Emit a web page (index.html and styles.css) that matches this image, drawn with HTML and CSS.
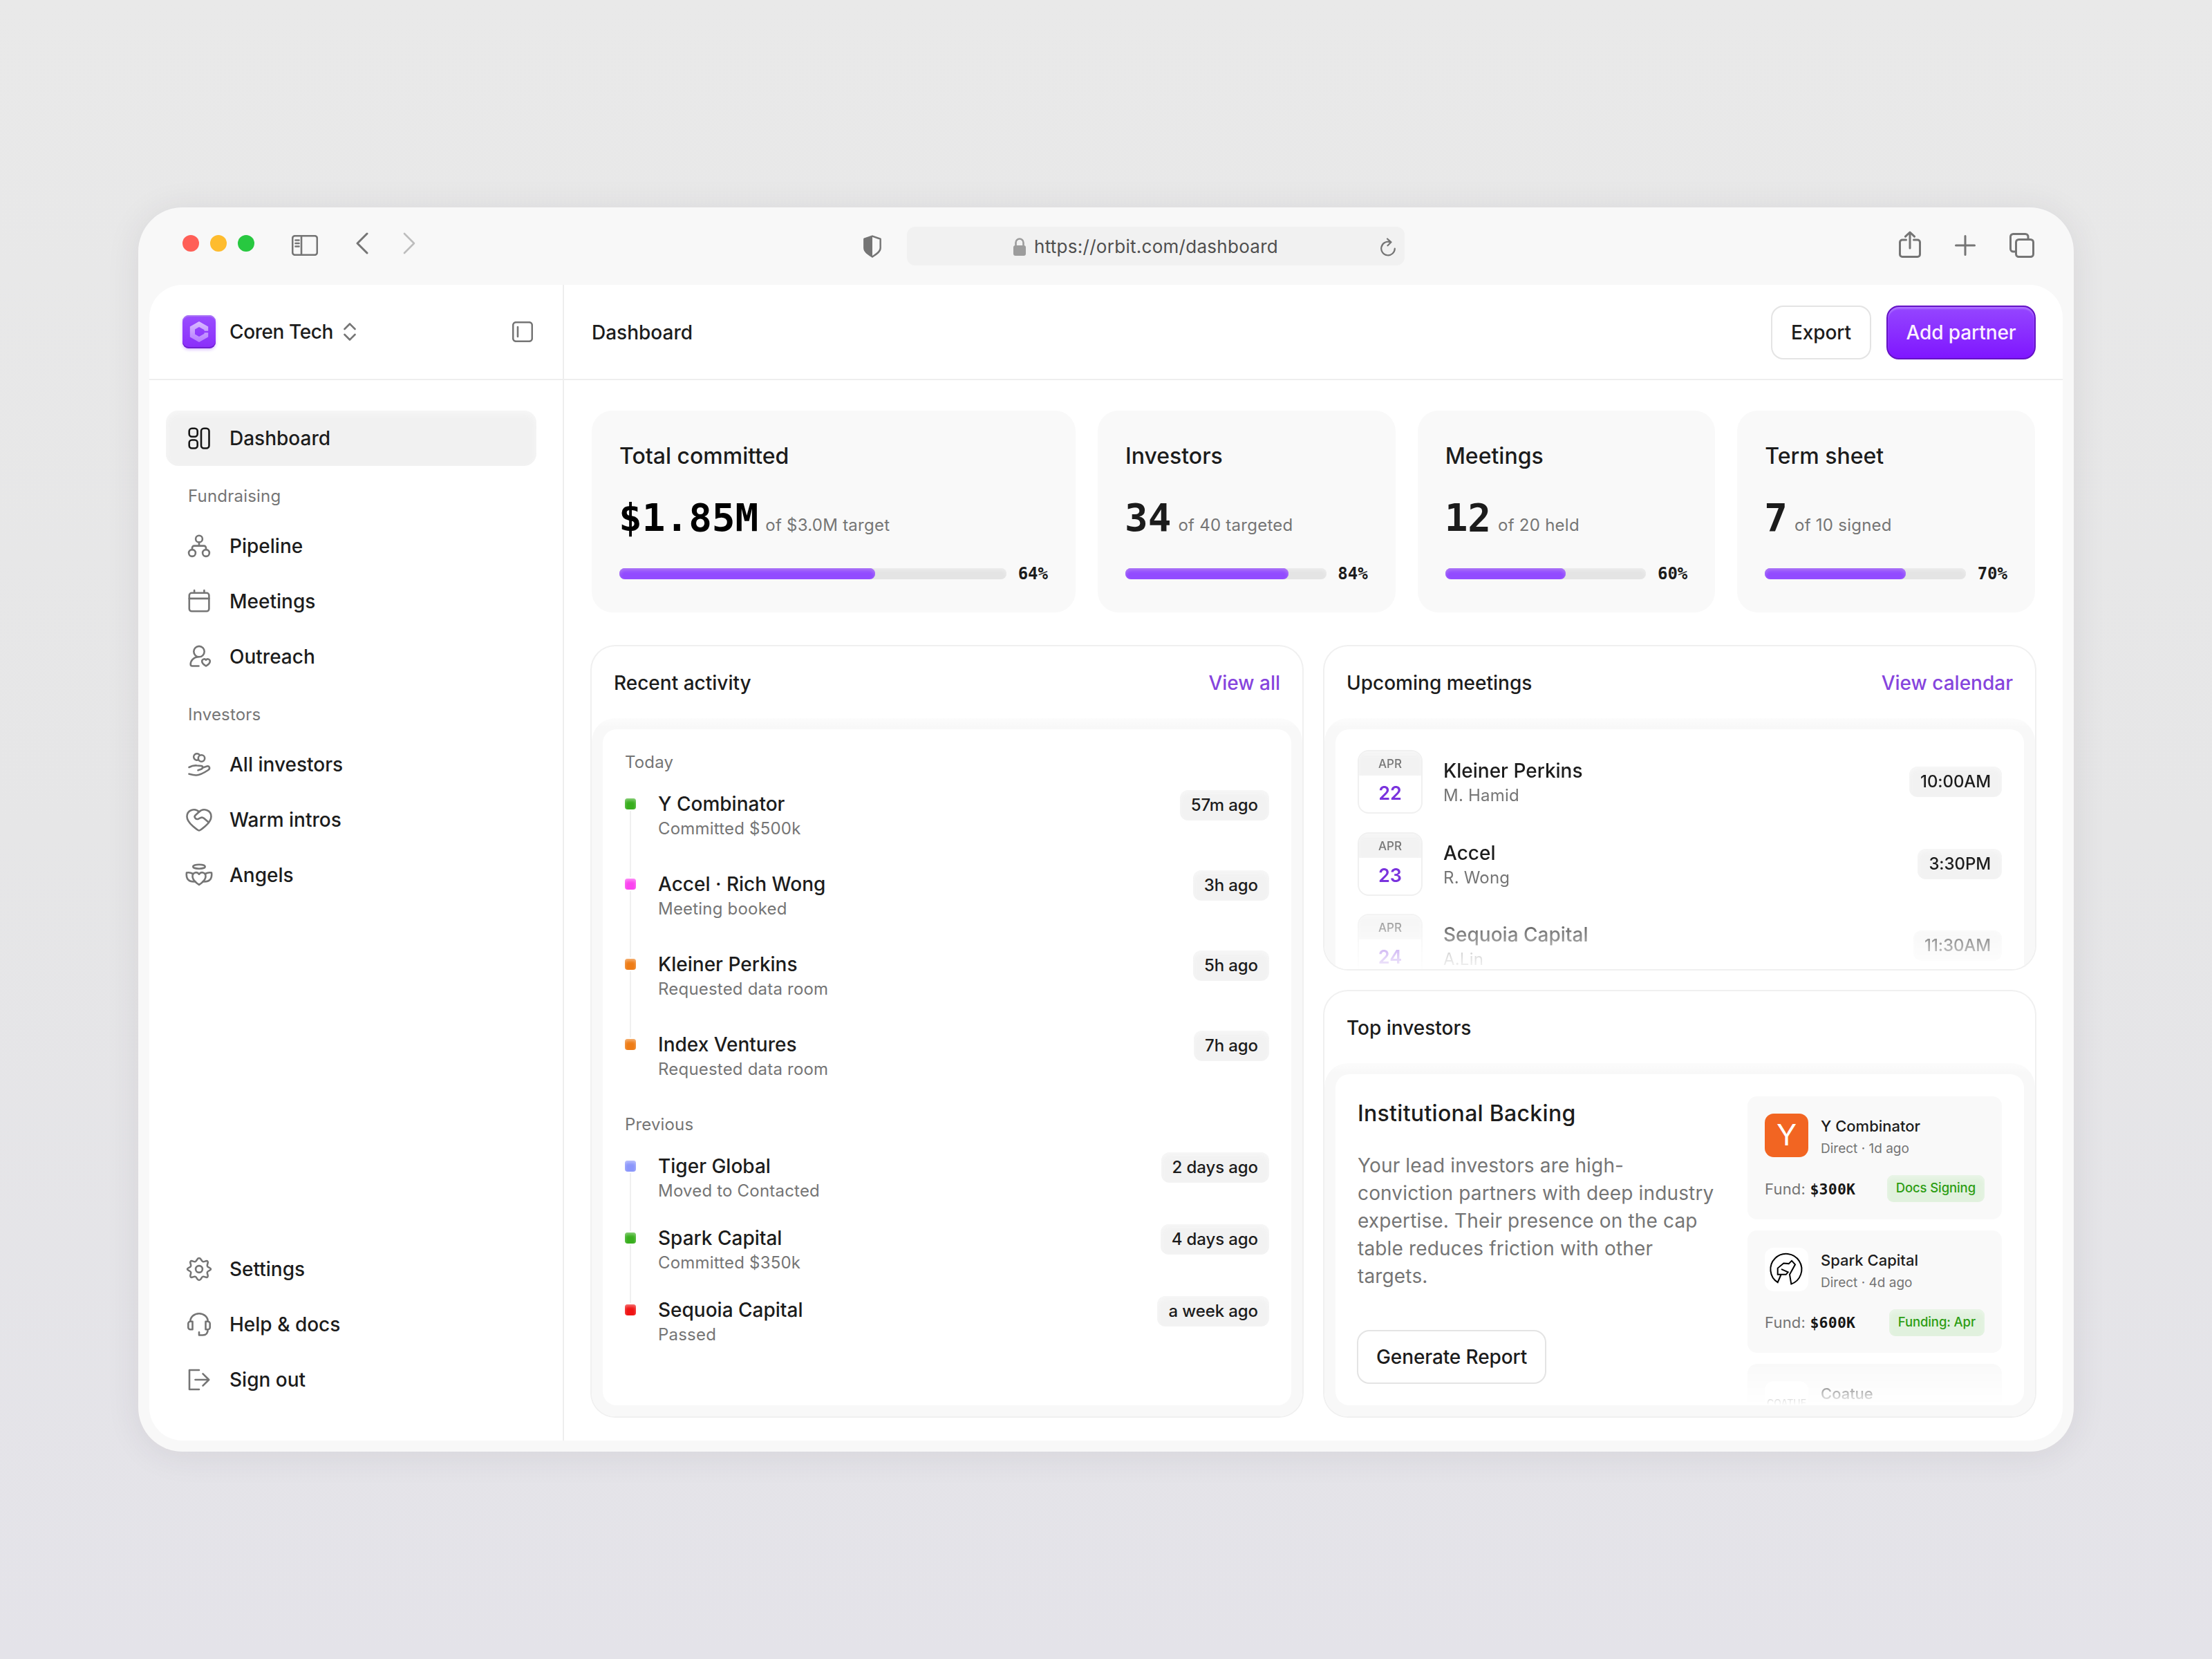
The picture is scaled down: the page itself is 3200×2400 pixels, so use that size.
FILE: index.html
```html
<!DOCTYPE html>
<html lang="en">
<head>
  <meta charset="UTF-8">
  <meta name="viewport" content="width=device-width, initial-scale=1.0">
  <title>Orbit - Dashboard</title>
  <link rel="stylesheet" href="styles.css">
</head>
<body>
  <div class="browser">
    <!-- Browser toolbar -->
    <div class="toolbar">
      <div class="toolbar-left">
        <div class="lights"><i class="red"></i><i class="yellow"></i><i class="green"></i></div>
        <svg class="tb-sidebar" width="38" height="30" viewBox="0 0 38 30"><rect x="1.2" y="1.2" width="35.6" height="27.6" rx="3.5"/><path d="M14 1v28M5.5 7.5h5M5.5 12h5M5.5 16.5h5"/></svg>
        <svg class="tb-back" width="18" height="32" viewBox="0 0 18 32"><path d="M16 2L2 16l14 14"/></svg>
        <svg class="tb-forward" width="18" height="32" viewBox="0 0 18 32"><path d="M2 2l14 14L2 30"/></svg>
      </div>
      <div class="toolbar-center">
        <svg class="tb-shield" width="28" height="34" viewBox="0 0 30 36"><path d="M15 2.500L27.500 7v14c0 6-7 10-12.500 13.500C9.500 31 2.500 27 2.500 21V7z"/><path class="solid" d="M15 2L2 7v14c0 6 7 10 13 14z"/></svg>
        <div class="url-bar">
          <svg class="tb-lock" width="20" height="26" viewBox="0 0 20 26"><rect class="solid" x="1" y="11" width="18" height="15" rx="3"/><path d="M4.500 12V7a5.500 5.500 0 0 1 11 0v5"/></svg>
          <span>https://orbit.com/dashboard</span>
          <svg class="tb-reload" width="24" height="28" viewBox="0 0 24 28"><path d="M15 6.200A9.800 9.800 0 1 0 21.800 15.500M11 1.500l5.500 4.800-5 5"/></svg>
        </div>
      </div>
      <div class="toolbar-right">
        <svg width="32" height="40" viewBox="0 0 32 40"><path d="M10.500 13H5a3.500 3.500 0 0 0-3.500 3.500V34A3.500 3.500 0 0 0 5 37.500h22a3.500 3.500 0 0 0 3.500-3.500V16.500A3.500 3.500 0 0 0 27 13h-5.500M16 25V2M9.500 8.200L16 2l6.500 6.200"/></svg>
        <svg width="30" height="30" viewBox="0 0 30 30"><path d="M15 1.500v27M1.500 15h27"/></svg>
        <svg width="36" height="36" viewBox="0 0 36 36"><path d="M9 27H5.500A4 4 0 0 1 1.500 23V5.500a4 4 0 0 1 4-4H23a4 4 0 0 1 4 4V9"/><rect x="9.500" y="9.500" width="25" height="25" rx="4"/></svg>
      </div>
    </div>

    <div class="app">
      <!-- Sidebar -->
      <aside class="sidebar">
        <div class="workspace">
          <svg class="logo" width="48" height="48" viewBox="0 0 48 48">
            <defs>
              <linearGradient id="logoC" x1="0" y1="0" x2="0" y2="1"><stop offset="0" stop-color="#d9bcff"/><stop offset="1" stop-color="#b67cff"/></linearGradient>
            </defs>
            <path fill="url(#logoC)" d="M24 9l13.200 7.500v6.300H31.500v-1.500L24 17l-6 3.500v7L24 31l7.500-4.300v-1.500h5.700v6.300L24 39l-13.200-7.500v-15z"/>
          </svg>
          <span class="workspace-name">Coren Tech</span>
          <svg class="updown" width="18" height="26" viewBox="0 0 18 26"><path d="M1.500 9L9 1.500 16.500 9M1.500 17L9 24.500l7.500-7.500"/></svg>
          <svg class="collapse" width="30" height="30" viewBox="0 0 30 30"><rect x="1.200" y="1.200" width="27.600" height="27.600" rx="4.500"/><path d="M8 8v14"/></svg>
        </div>
        <nav class="nav">
          <a class="nav-item active"><svg viewBox="0 0 44 44"><rect x="7.700" y="7.700" width="12" height="12" rx="4"/><rect x="7.700" y="24.500" width="12" height="12" rx="4"/><rect x="25" y="7.700" width="11.500" height="28.800" rx="4"/></svg>Dashboard</a>
          <h4>Fundraising</h4>
          <a class="nav-item"><svg viewBox="0 0 44 44"><circle cx="22" cy="11.700" r="4.900"/><circle cx="12" cy="32" r="4.900"/><circle cx="32" cy="32" r="4.900"/><path d="M22 16.600v5M12 27v-2.400a3 3 0 0 1 3-3h14a3 3 0 0 1 3 3V27"/></svg>Pipeline</a>
          <a class="nav-item"><svg viewBox="0 0 44 44"><rect x="7.800" y="9.800" width="28.600" height="26.500" rx="3.500"/><path d="M7.800 17.900h28.600M15.100 9.800V6M29.400 9.800V6"/></svg>Meetings</a>
          <a class="nav-item"><svg viewBox="0 0 44 44"><circle cx="22" cy="14.600" r="7.700"/><path d="M20.500 22.300C14 23 9.700 27.500 9.700 33q0 2.500 2.500 2.500h9.300"/><path d="M32 35.500c-3-1.800-5.800-3.800-5.800-6.700a3.200 3.200 0 0 1 5.800-2 3.200 3.200 0 0 1 5.800 2c0 2.900-2.800 4.900-5.800 6.700z"/></svg>Outreach</a>
          <h4>Investors</h4>
          <a class="nav-item"><svg viewBox="0 0 44 44"><circle cx="25.500" cy="13" r="4.700"/><path d="M21 15.200a4.700 4.700 0 1 1 1.300-7.500M7.500 26c4-2.200 8-3 11.500-2.500l6 .5c3 .3 3 3.600 0 4.700l-4.500 1.600M26.800 26.800l6.700-2.200c3.600-1 5 3.200 1.700 5.400-6 4-12 7.500-17.500 7.500-3.700 0-6.500-.8-10.200-1.800"/></svg>All investors</a>
          <a class="nav-item"><svg viewBox="0 0 44 44"><path d="M22 37.500c-1 0-17.500-10.500-17.500-20C4.500 7.500 16 4.500 22 10.500c6-6 17.500-3 17.500 7 0 9.500-16.500 20-17.500 20z"/><path d="M22 10.500l-5.500 5c-2.600 2.600 1 6.500 4.500 5.200l3-1.600c2-1 3.500-.6 5 .7l7 6"/></svg>Warm intros</a>
          <a class="nav-item"><svg viewBox="0 0 44 44"><ellipse cx="22" cy="9.700" rx="8.700" ry="3"/><path d="M22 36c-5-3.300-9.500-7.400-9.500-12.300 0-5.600 6.500-7.500 9.500-3 3-4.500 9.500-2.600 9.500 3C31.500 28.600 27 32.700 22 36z"/><path d="M13 20c-3-1.700-6-2.200-9-1.500-1.300 9 3 13.800 12.500 12.800M31 20c3-1.700 6-2.200 9-1.500 1.300 9-3 13.800-12.500 12.800"/></svg>Angels</a>
          <div class="nav-bottom">
            <a class="nav-item"><svg viewBox="0 0 44 44"><circle cx="22" cy="22" r="4.900"/><path d="M22 6c3.200 0 2.900 4.200 5.400 5.100 2.400.9 5.100-2.300 6.900-.4 1.800 1.800-1.300 4.500-.4 6.900.9 2.500 5.100 2.200 5.100 4.400s-4.200 1.900-5.100 4.400c-.9 2.400 2.200 5.100.4 6.900-1.800 1.900-4.500-1.300-6.900-.4C24.900 33.800 25.200 38 22 38s-2.900-4.200-5.400-5.100c-2.400-.9-5.100 2.300-6.900.4-1.800-1.800 1.300-4.500.4-6.900C9.200 23.900 5 24.200 5 22s4.200-1.900 5.100-4.400c.9-2.400-2.200-5.100-.4-6.900 1.800-1.900 4.500 1.300 6.900.4C19.100 10.200 18.800 6 22 6z"/></svg>Settings</a>
            <a class="nav-item"><svg viewBox="0 0 44 44"><path d="M12.500 17.700v11.500H9.300A3 3 0 0 1 6.300 26.200v-5.500a3 3 0 0 1 3-3zM31.500 17.700v11.500h3.200a3 3 0 0 0 3-3v-5.500a3 3 0 0 0-3-3zM9.300 17.700a12.700 11.500 0 0 1 25.400 0M34.700 29.200c0 5.500-2.500 8.300-7.500 8.300H22v-4.200"/></svg>Help &amp; docs</a>
            <a class="nav-item"><svg viewBox="0 0 44 44"><path d="M22 8H8v28h14M16.500 22H36M27.500 13.300l8.700 8.700-8.700 8.700"/></svg>Sign out</a>
          </div>
        </nav>
      </aside>

      <!-- Main content -->
      <main class="main">
        <header class="topbar">
          <h1>Dashboard</h1>
          <div class="actions">
            <button class="btn">Export</button>
            <button class="btn btn-primary">Add partner</button>
          </div>
        </header>

        <div class="content">
          <section class="stats">
            <div class="stat">
              <h2>Total committed</h2>
              <p><b class="black">$1.85M</b><span>of $3.0M target</span></p>
              <div class="progress"><div class="track"><div class="fill" style="width: 66%"></div></div><em>64%</em></div>
            </div>
            <div class="stat">
              <h2>Investors</h2>
              <p><b>34</b><span>of 40 targeted</span></p>
              <div class="progress"><div class="track"><div class="fill" style="width: 81%"></div></div><em>84%</em></div>
            </div>
            <div class="stat">
              <h2>Meetings</h2>
              <p><b>12</b><span>of 20 held</span></p>
              <div class="progress"><div class="track"><div class="fill" style="width: 60%"></div></div><em>60%</em></div>
            </div>
            <div class="stat">
              <h2>Term sheet</h2>
              <p><b>7</b><span>of 10 signed</span></p>
              <div class="progress"><div class="track"><div class="fill" style="width: 70%"></div></div><em>70%</em></div>
            </div>
          </section>

          <div class="panels">
            <!-- Recent activity -->
            <section class="panel">
              <div class="panel-head"><h3>Recent activity</h3><a>View all</a></div>
              <div class="panel-body">
                <div class="sheet activity">
                  <h5>Today</h5>
                  <ul class="today">
                    <li class="green"><i></i><div><strong>Y Combinator</strong><small>Committed $500k</small></div><span class="pill">57m ago</span></li>
                    <li class="pink"><i></i><div><strong>Accel · Rich Wong</strong><small>Meeting booked</small></div><span class="pill">3h ago</span></li>
                    <li class="orange"><i></i><div><strong>Kleiner Perkins</strong><small>Requested data room</small></div><span class="pill">5h ago</span></li>
                    <li class="orange"><i></i><div><strong>Index Ventures</strong><small>Requested data room</small></div><span class="pill">7h ago</span></li>
                  </ul>
                  <h5>Previous</h5>
                  <ul class="previous">
                    <li class="blue"><i></i><div><strong>Tiger Global</strong><small>Moved to Contacted</small></div><span class="pill">2 days ago</span></li>
                    <li class="green"><i></i><div><strong>Spark Capital</strong><small>Committed $350k</small></div><span class="pill">4 days ago</span></li>
                    <li class="red"><i></i><div><strong>Sequoia Capital</strong><small>Passed</small></div><span class="pill">a week ago</span></li>
                  </ul>
                </div>
              </div>
            </section>

            <div class="right-col">
              <!-- Upcoming meetings -->
              <section class="panel panel-meetings">
                <div class="panel-head"><h3>Upcoming meetings</h3><a>View calendar</a></div>
                <div class="panel-body">
                  <div class="sheet">
                    <ul class="meetings">
                      <li><div class="date"><span>APR</span><b>22</b></div><div class="who"><strong>Kleiner Perkins</strong><small>M. Hamid</small></div><span class="pill">10:00AM</span></li>
                      <li><div class="date"><span>APR</span><b>23</b></div><div class="who"><strong>Accel</strong><small>R. Wong</small></div><span class="pill">3:30PM</span></li>
                      <li><div class="date"><span>APR</span><b>24</b></div><div class="who"><strong>Sequoia Capital</strong><small>A.Lin</small></div><span class="pill">11:30AM</span></li>
                    </ul>
                  </div>
                </div>
              </section>

              <!-- Top investors -->
              <section class="panel panel-investors">
                <div class="panel-head"><h3>Top investors</h3></div>
                <div class="panel-body">
                  <div class="sheet investors">
                    <div class="backing">
                      <h2>Institutional Backing</h2>
                      <p>Your lead investors are high-<br>conviction partners with deep industry<br>expertise. Their presence on the cap<br>table reduces friction with other<br>targets.</p>
                      <button class="btn">Generate Report</button>
                    </div>
                    <div class="investor-list">
                      <article>
                        <div class="inv-head">
                          <div class="inv-logo yc">Y</div>
                          <div><strong>Y Combinator</strong><small>Direct · 1d ago</small></div>
                        </div>
                        <div class="inv-foot"><span>Fund: <b>$300K</b></span><span class="badge">Docs Signing</span></div>
                      </article>
                      <article>
                        <div class="inv-head">
                          <div class="inv-logo">
                            <svg width="62" height="62" viewBox="0 0 62 62"><path d="M23.300 39.500l-4.600 10.700A22.500 22.500 0 1 1 38.300 52.500L36 38.800l8-14.500-5-5.400-4.300 4.200-7.400-.6-8.600 7.100v9.200h12l3-3.500-9-3.900"/></svg>
                          </div>
                          <div><strong>Spark Capital</strong><small>Direct · 4d ago</small></div>
                        </div>
                        <div class="inv-foot"><span>Fund: <b>$600K</b></span><span class="badge">Funding: Apr</span></div>
                      </article>
                      <article class="faded">
                        <div class="inv-head">
                          <div class="inv-logo coatue">COATUE</div>
                          <div><strong>Coatue</strong></div>
                        </div>
                      </article>
                    </div>
                  </div>
                </div>
              </section>
            </div>
          </div>
        </div>
      </main>
    </div>
  </div>
</body>
</html>
```
FILE: styles.css
```css
/* General */
* {
  box-sizing: border-box;
  margin: 0;
  padding: 0;
}
body {
  width: 3200px;
  height: 2400px;
  padding: 300px 200px;
  overflow: hidden;
  background: linear-gradient(#e9e9e9, #e6e6e7 50%, #e4e3e9);
  font-family: Inter, "Liberation Sans", sans-serif;
  font-size: 28px;
  font-weight: 500;
  color: #1c1c1c;
}
h1, h2, h3, h4, h5, strong {
  font-size: 28px;
  font-weight: 500;
}
ul {
  list-style: none;
}
small {
  font-size: 24px;
  font-weight: 400;
  letter-spacing: 0.2px;
  color: #757575;
}
svg {
  display: block;
  flex: none;
  fill: none;
  stroke: #757575;
  stroke-width: 2.6;
  stroke-linecap: round;
  stroke-linejoin: round;
}

/* Browser window */
.browser {
  width: 2800px;
  height: 1800px;
  padding: 0 16px 16px;
  border-radius: 64px;
  background: #f8f8f8;
  box-shadow: 0 4px 50px rgba(50, 45, 65, 0.09);
  display: flex;
  flex-direction: column;
}
.toolbar {
  height: 112px;
  padding: 0 41px 0 48px;
  display: grid;
  grid-template-columns: 984px 784px 1fr;
}
.toolbar-left {
  display: flex;
  align-items: center;
  height: 104px;
}
.lights {
  display: flex;
  gap: 16px;
}
.lights i {
  width: 24px;
  height: 24px;
  border-radius: 50%;
}
.lights .red { background: #ff5f57; }
.lights .yellow { background: #febc2e; }
.lights .green { background: #28c840; }
.tb-sidebar { margin: 6px 0 0 54px; }
.tb-back { margin-left: 55px; stroke-width: 3; }
.tb-forward { margin-left: 50px; stroke: #bdbdbd; }
.toolbar-center {
  display: flex;
  align-items: center;
  justify-content: space-between;
}
.solid {
  fill: #757575;
  stroke: none;
}
.url-bar {
  width: 720px;
  height: 56px;
  border-radius: 12px;
  background: #f1f1f1;
  color: #4f4f4f;
  font-size: 26px;
  font-weight: 400;
  display: flex;
  align-items: center;
  padding: 0 12px 0 153px;
}
.url-bar span { letter-spacing: 0.28px; margin-left: 11px; }
.tb-shield { margin-top: -1px; }
.tb-lock { margin-top: 2px; stroke: #9c9c9c; }
.tb-lock .solid { fill: #9c9c9c; }
.tb-reload { margin: 3px 0 0 auto; stroke-width: 2.2; }
.toolbar-right {
  display: flex;
  align-items: center;
  justify-content: flex-end;
  gap: 49px;
}
.toolbar-right svg { stroke-width: 3; margin-top: -2px; }
.toolbar-right svg:first-child { margin-top: -5px; }

.app {
  flex: 1;
  display: flex;
  background: #fff;
  border-radius: 48px;
  overflow: hidden;
}

/* Sidebar */
.sidebar {
  width: 600px;
  border-right: 2px solid #eee;
  display: flex;
  flex-direction: column;
}
.workspace {
  height: 138px;
  padding: 0 43px 0 48px;
  border-bottom: 2px solid #eee;
  display: flex;
  align-items: center;
}
.logo {
  border-radius: 9px;
  background: linear-gradient(#9a4dff, #8a2dfa);
  box-shadow: inset 0 2px 0 #a873f5, inset 0 -2px 0 #6f1fd0, 0 2px 4px rgba(130, 40, 250, 0.3);
  stroke: none;
}
.workspace-name {
  margin-left: 20px;
  width: 149px;
  letter-spacing: -0.4px;
  white-space: nowrap;
}
.updown { margin-left: 16px; }
.collapse { margin-left: auto; }
.nav {
  flex: 1;
  padding: 44px 38px 48px 24px;
  display: flex;
  flex-direction: column;
}
.nav-item {
  height: 80px;
  padding-left: 26px;
  border-radius: 18px;
  display: flex;
  align-items: center;
  gap: 22px;
}
.nav-item svg {
  width: 44px;
  height: 44px;
}
.nav-item.active {
  background: #f1f1f1;
  box-shadow: inset 0 4px 8px #f7f7f7;
}
.nav-item.active svg { stroke: #171717; }
.nav h4 {
  height: 76px;
  padding: 12px 0 0 32px;
  font-size: 24px;
  font-weight: 400;
  letter-spacing: 0.2px;
  line-height: 64px;
  color: #757575;
}
.nav-bottom { margin-top: auto; }

/* Top bar */
.main {
  flex: 1;
  display: flex;
  flex-direction: column;
}
.topbar {
  flex: none;
  height: 138px;
  padding: 1px 39px 0 40px;
  border-bottom: 2px solid #eee;
  display: flex;
  align-items: center;
  justify-content: space-between;
}
.actions {
  display: flex;
  gap: 22px;
}
.btn {
  height: 78px;
  padding: 0 26px;
  border: 2px solid #e4e4e4;
  border-radius: 18px;
  background: #fff;
  color: #1c1c1c;
  font: inherit;
  letter-spacing: -0.1px;
}
.actions .btn { padding: 0 26.500px; }
.actions .btn:first-child { padding: 0 27px; }
.actions .btn-primary {
  border-color: #6412c4;
  background: linear-gradient(#9546ff, #7f16ff);
  box-shadow: inset 0 3px 2px #ac70ff;
  color: #fbf0ff;
}

/* Stat cards */
.content {
  flex: 1;
  min-height: 0;
  padding: 44px 40px 35px;
  display: flex;
  flex-direction: column;
  gap: 49px;
}
.stats {
  flex: none;
  display: grid;
  grid-template-columns: 700px 1fr 1fr 1fr;
  gap: 32px;
}
.stat {
  height: 292px;
  padding: 42px 40px 40px;
  border-radius: 30px;
  background: #f9f9f9;
}
h2 {
  font-size: 32px;
  line-height: 48px;
}
.stat p {
  margin-top: 27px;
  height: 76px;
  line-height: 76px;
  white-space: nowrap;
}
.stat b, .progress em, .inv-foot b {
  font-family: "DejaVu Sans Mono", monospace;
  font-weight: 700;
}
.stat b { margin-left: -1px; font-size: 56px; }
.stat .black { color: #000; }
.stat p span {
  margin-left: 10px;
  font-size: 24px;
  font-weight: 400;
  letter-spacing: 0.25px;
  color: #757575;
}
.progress {
  margin-top: 35px;
  display: flex;
  align-items: center;
  gap: 16.500px;
  height: 16px;
}
.track {
  flex: 1;
  height: 16px;
  border-radius: 8px;
  background: #e4e4e4;
  box-shadow: inset 0 3px 4px #ececec;
}
.fill {
  height: 100%;
  border-radius: 8px;
  background: #924bff;
  box-shadow: inset 0 3px 5px #ae7af5;
}
.progress em {
  font-size: 24px;
  font-style: normal;
}

/* Panels */
.panels {
  flex: 1;
  min-height: 0;
  display: grid;
  grid-template-columns: 1fr 1fr;
  gap: 32px;
}
.right-col {
  display: flex;
  flex-direction: column;
  gap: 32px;
}
.panel {
  border-radius: 34px;
  box-shadow: 0 0 0 2px #f0f0f0;
  display: flex;
  flex-direction: column;
  overflow: hidden;
}
.panel-meetings { height: 467px; }
.panel-investors { flex: 1; }
.panel-head {
  height: 104px;
  padding: 1px 32px 0;
  display: flex;
  align-items: center;
  justify-content: space-between;
}
.panel-head a { color: #8644dd; }
.panel-body {
  flex: 1;
  min-height: 0;
  padding: 16px;
  border-radius: 34px;
  background: linear-gradient(#fcfcfc, #f8f8f8 14px);
  display: flex;
}
.sheet {
  flex: 1;
  background: #fff;
  border-radius: 20px;
  padding: 32px;
}

/* Activity list */
.activity h5 {
  font-size: 24px;
  font-weight: 400;
  line-height: 32px;
  letter-spacing: 0.15px;
  color: #757575;
}
.activity li {
  position: relative;
  display: flex;
  align-items: flex-start;
  height: 116px;
}
.activity .today { padding-top: 24px; height: 492px; }
.activity .previous { padding-top: 24px; }
.activity .previous li { height: 104px; }
.activity i {
  width: 16px;
  height: 16px;
  margin: 12px 32px 0 0;
  border-radius: 4px;
  background: var(--dot);
  box-shadow: inset 0 3px 4px rgba(255, 255, 255, 0.4);
}
.activity li:not(:last-child)::after {
  content: "";
  position: absolute;
  left: 7px;
  top: 30px;
  bottom: -10px;
  width: 2px;
  background: #f0f0f0;
}
.activity .green { --dot: #38ae1d; }
.activity .pink { --dot: #fb43f0; }
.activity .orange { --dot: #ee7c16; }
.activity .blue { --dot: #8b96fb; }
.activity .red { --dot: #f01414; }
.activity strong, .who strong {
  display: block;
  line-height: 40px;
}
.activity small, .who small {
  display: block;
  line-height: 32px;
}
.pill {
  margin-left: auto;
  height: 44px;
  padding: 0 16px;
  border-radius: 12px;
  background: #f2f2f2;
  box-shadow: inset 0 4px 6px #f7f7f7;
  font-size: 24px;
  letter-spacing: -0.1px;
  line-height: 44px;
}

/* Upcoming meetings */
.panel-meetings .panel-body { padding-bottom: 0; }
.panel-meetings .sheet {
  padding-top: 30px;
  padding-bottom: 0;
  border-radius: 20px 20px 0 0;
  overflow: hidden;
}
.meetings {
  display: flex;
  flex-direction: column;
  gap: 26.500px;
  height: 317px;
  mask-image: linear-gradient(#000 218px, transparent 324px);
}
.meetings li {
  display: flex;
  align-items: center;
}
.date {
  flex: none;
  width: 94px;
  height: 92px;
  margin-right: 30px;
  border: 2px solid #f0f0f0;
  border-radius: 16px;
  overflow: hidden;
  text-align: center;
}
.date span {
  display: block;
  height: 35px;
  background: #f2f2f2;
  box-shadow: inset 0 4px 6px #f7f7f7;
  color: #777;
  font-size: 17px;
  font-weight: 500;
  line-height: 37px;
}
.date b {
  color: #7a33dd;
  font-weight: 600;
  font-size: 27px;
  line-height: 52px;
}

/* Top investors */
.investors {
  display: flex;
  justify-content: space-between;
  overflow: hidden;
  padding-bottom: 0;
}
.backing h2 { margin-top: 1px; letter-spacing: 0.3px; }
.backing p {
  margin: 31px 0 58px;
  line-height: 40px;
  font-weight: 400;
  letter-spacing: 0.15px;
  color: #757575;
  white-space: nowrap;
}
.backing .btn { margin-left: -1px; }
.investor-list {
  width: 368px;
  height: 440px;
  display: flex;
  flex-direction: column;
  gap: 16px;
}
.investor-list article {
  flex: none;
  height: 177.500px;
  padding: 25px 25px 0;
  border-radius: 14px;
  background: #f9f9f9;
}
.inv-head {
  display: flex;
  gap: 18px;
}
.inv-logo {
  width: 63px;
  height: 63px;
  border-radius: 13px;
  background: #fff;
}
.inv-logo svg {
  stroke: #000;
  stroke-width: 2;
  stroke-linejoin: miter;
}
.inv-logo.yc {
  background: #f26522;
  color: #fff;
  font-size: 43px;
  font-weight: 400;
  line-height: 60px;
  text-align: center;
}
.inv-head strong {
  display: block;
  font-size: 22px;
  line-height: 36px;
}
.inv-head small {
  display: block;
  font-size: 19px;
  letter-spacing: 0;
  line-height: 30px;
}
.inv-foot {
  margin-top: 23px;
  height: 39px;
  display: flex;
  align-items: center;
  justify-content: space-between;
  font-size: 22px;
  font-weight: 400;
  letter-spacing: 0.2px;
  color: #757575;
}
.inv-foot b { color: #171717; font-size: 21.500px; }
.badge {
  height: 39px;
  padding: 0 13px;
  border-radius: 9px;
  background: #e1f1de;
  box-shadow: inset 0 4px 6px #eaf5e8;
  color: #2c9d12;
  font-size: 18.500px;
  font-weight: 500;
  letter-spacing: -0.1px;
  line-height: 36px;
}
.faded { mask-image: linear-gradient(#000, transparent 60px); }
.coatue {
  font-size: 14px;
  line-height: 63px;
  text-align: center;
}
```
